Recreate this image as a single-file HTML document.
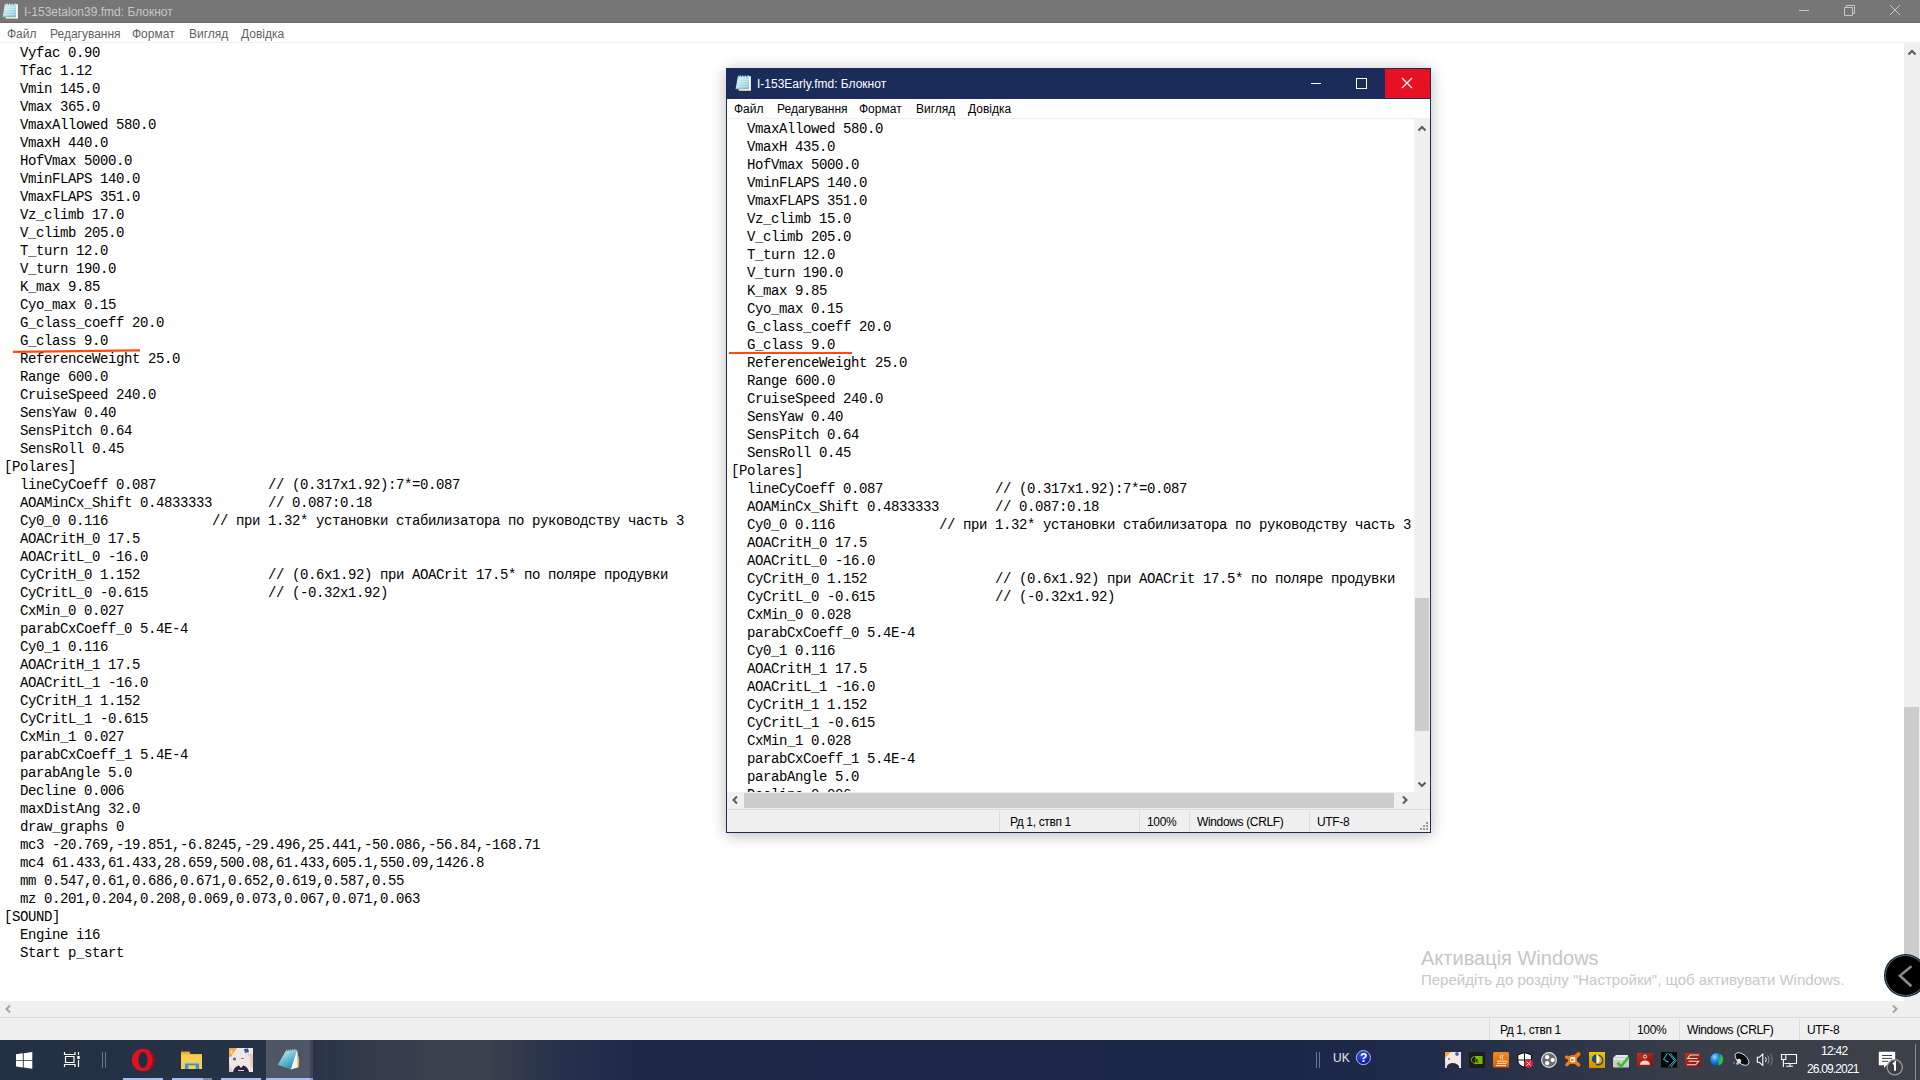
<!DOCTYPE html>
<html><head><meta charset="utf-8">
<style>
html,body{margin:0;padding:0;}
body{width:1920px;height:1080px;overflow:hidden;position:relative;background:#fff;font-family:"Liberation Sans",sans-serif;}
.a{position:absolute;}
.mono{font-family:"Liberation Mono",monospace;font-size:14px;letter-spacing:-0.4px;line-height:18px;white-space:pre;color:#000;}
.ui{font-family:"Liberation Sans",sans-serif;font-size:12px;white-space:pre;line-height:14px;}
</style></head><body>

<!-- ============ BIG WINDOW ============ -->
<div class="a" style="left:0;top:0;width:1920px;height:22px;background:#767676;"></div><div class="a" style="left:0;top:22px;width:1920px;height:1px;background:#6a6a6a;"></div>
<!-- notepad icon (big) -->
<svg class="a" style="left:-1px;top:0px" width="24" height="22" viewBox="0 0 24 22">
  <defs><linearGradient id="npbb" x1="0" y1="0" x2="1" y2="1"><stop offset="0" stop-color="#e2f6fa"/><stop offset="0.6" stop-color="#a9d8e4"/><stop offset="1" stop-color="#7fbfd0"/></linearGradient></defs>
  <path d="M6.8 4.2H18.9V18.9H6.8Z" fill="#f7fbfb"/>
  <path d="M6.8 18.2H18.9V19H6.8Z" fill="#d9b66a"/>
  <path d="M6 3.6H17V17H3.6Z" fill="url(#npbb)"/>
  <path d="M5.5 7.2H16.6M5.3 9.6H16.6M5 12H16.6M4.6 14.4H16.6" stroke="#e6f7fa" stroke-width="0.7" opacity="0.8"/>
  <path d="M3.8 16.4H16.8V17.2H3.6Z" fill="#6fb5c8"/>
  <path d="M6.4 3H7.6V4.4H6.4Z M8.9 3H10.1V4.4H8.9Z M11.4 3H12.6V4.4H11.4Z M13.9 3H15.1V4.4H13.9Z" fill="#5e5e5e"/>
</svg>
<div class="a ui" style="left:24px;top:5px;color:#c6c6c6;">I-153etalon39.fmd: Блокнот</div>
<!-- controls -->
<div class="a" style="left:1799px;top:10px;width:10px;height:1px;background:#c6c6c6;"></div>
<svg class="a" style="left:1843px;top:4px" width="13" height="13" viewBox="0 0 13 13"><path d="M1.5 3.5H9.5V11.5H1.5Z M3.5 3.5V1.5H11.5V9.5H9.5" stroke="#c6c6c6" stroke-width="1" fill="none"/></svg>
<svg class="a" style="left:1889px;top:4px" width="12" height="12" viewBox="0 0 12 12"><path d="M1 1L11 11M11 1L1 11" stroke="#c6c6c6" stroke-width="1"/></svg>

<!-- menu -->
<div class="a ui" style="left:7px;top:27px;color:#5f5f5f;">Файл</div>
<div class="a ui" style="left:50px;top:27px;color:#5f5f5f;">Редагування</div>
<div class="a ui" style="left:132px;top:27px;color:#5f5f5f;">Формат</div>
<div class="a ui" style="left:189px;top:27px;color:#5f5f5f;">Вигляд</div>
<div class="a ui" style="left:241px;top:27px;color:#5f5f5f;">Довідка</div>
<div class="a" style="left:0;top:42px;width:1920px;height:1px;background:#f0f0f0;"></div>

<!-- text -->
<div class="a mono" id="bigtext" style="left:4px;top:44px;">  Vyfac 0.90
  Tfac 1.12
  Vmin 145.0
  Vmax 365.0
  VmaxAllowed 580.0
  VmaxH 440.0
  HofVmax 5000.0
  VminFLAPS 140.0
  VmaxFLAPS 351.0
  Vz_climb 17.0
  V_climb 205.0
  T_turn 12.0
  V_turn 190.0
  K_max 9.85
  Cyo_max 0.15
  G_class_coeff 20.0
  G_class 9.0
  ReferenceWeight 25.0
  Range 600.0
  CruiseSpeed 240.0
  SensYaw 0.40
  SensPitch 0.64
  SensRoll 0.45
[Polares]
  lineCyCoeff 0.087              // (0.317x1.92):7*=0.087
  AOAMinCx_Shift 0.4833333       // 0.087:0.18
  Cy0_0 0.116             // при 1.32* установки стабилизатора по руководству часть 3
  AOACritH_0 17.5
  AOACritL_0 -16.0
  CyCritH_0 1.152                // (0.6x1.92) при AOACrit 17.5* по поляре продувки
  CyCritL_0 -0.615               // (-0.32x1.92)
  CxMin_0 0.027
  parabCxCoeff_0 5.4E-4
  Cy0_1 0.116
  AOACritH_1 17.5
  AOACritL_1 -16.0
  CyCritH_1 1.152
  CyCritL_1 -0.615
  CxMin_1 0.027
  parabCxCoeff_1 5.4E-4
  parabAngle 5.0
  Decline 0.006
  maxDistAng 32.0
  draw_graphs 0
  mc3 -20.769,-19.851,-6.8245,-29.496,25.441,-50.086,-56.84,-168.71
  mc4 61.433,61.433,28.659,500.08,61.433,605.1,550.09,1426.8
  mm 0.547,0.61,0.686,0.671,0.652,0.619,0.587,0.55
  mz 0.201,0.204,0.208,0.069,0.073,0.067,0.071,0.063
[SOUND]
  Engine i16
  Start p_start</div>
<svg class="a" style="left:0;top:340px" width="160" height="20" viewBox="0 340 160 20"><path d="M13 351.9L140 350.4" stroke="#ff4a14" stroke-width="2.2"/></svg>

<!-- vertical scrollbar -->
<div class="a" style="left:1904px;top:43px;width:16px;height:958px;background:#f0f0f0;"></div>
<svg class="a" style="left:1907px;top:48px" width="10" height="8" viewBox="0 0 10 8"><path d="M1.5 6.5 L5 3 L8.5 6.5" stroke="#5a5a5a" stroke-width="2" fill="none"/></svg>
<div class="a" style="left:1904px;top:707px;width:15px;height:278px;background:#cdcdcd;"></div>

<!-- horizontal scrollbar -->
<div class="a" style="left:0;top:1001px;width:1920px;height:16px;background:#f0f0f0;"></div>
<svg class="a" style="left:4px;top:1004px" width="8" height="10" viewBox="0 0 8 10"><path d="M6 1.5 L2.5 5 L6 8.5" stroke="#a3a3a3" stroke-width="2" fill="none"/></svg>
<svg class="a" style="left:1891px;top:1004px" width="8" height="10" viewBox="0 0 8 10"><path d="M2 1.5 L5.5 5 L2 8.5" stroke="#a3a3a3" stroke-width="2" fill="none"/></svg>
<div class="a" style="left:0;top:1017px;width:1920px;height:1px;background:#dadada;"></div>
<!-- status bar -->
<div class="a" style="left:0;top:1018px;width:1920px;height:22px;background:#f0f0f0;"></div>
<div class="a" style="left:1489px;top:1019px;width:1px;height:21px;background:#dcdcdc;"></div>
<div class="a" style="left:1629px;top:1019px;width:1px;height:21px;background:#dcdcdc;"></div>
<div class="a" style="left:1679px;top:1019px;width:1px;height:21px;background:#dcdcdc;"></div>
<div class="a" style="left:1799px;top:1019px;width:1px;height:21px;background:#dcdcdc;"></div>
<div class="a ui" style="left:1500px;top:1023px;color:#000;letter-spacing:-0.35px;">Рд 1, ствп 1</div>
<div class="a ui" style="left:1637px;top:1023px;color:#000;letter-spacing:-0.35px;">100%</div>
<div class="a ui" style="left:1687px;top:1023px;color:#000;letter-spacing:-0.35px;">Windows (CRLF)</div>
<div class="a ui" style="left:1807px;top:1023px;color:#000;letter-spacing:-0.35px;">UTF-8</div>

<!-- watermark -->
<div class="a" style="left:1421px;top:947px;font-size:20px;line-height:22px;color:#c6c6c6;white-space:pre;">Активація Windows</div>
<div class="a" style="left:1421px;top:972px;font-size:15px;line-height:16px;color:#c8c8c8;white-space:pre;">Перейдіть до розділу "Настройки", щоб активувати Windows.</div>

<!-- circle button -->
<div class="a" style="left:1885px;top:955px;width:41px;height:41px;border-radius:50%;background:#000;box-sizing:border-box;border:1px solid #3f7a92;box-shadow:0 0 0 1px #1a1a1a;"></div>
<svg class="a" style="left:1898px;top:964px" width="16" height="25" viewBox="0 0 16 25"><path d="M13.4 2.2 L2 11.8 L13.4 22.2" stroke="#8a8a8a" stroke-width="2.6" fill="none"/></svg>

<!-- ============ SMALL WINDOW ============ -->
<div class="a" style="left:726px;top:68px;width:705px;height:765px;box-shadow:0 2px 14px rgba(0,0,0,0.28);background:#1b2c5b;"></div>
<div class="a" style="left:727px;top:69px;width:703px;height:30px;background:#1b2c5b;"></div>
<div class="a" style="left:1385px;top:69px;width:45px;height:29px;background:#e81123;"></div>
<svg class="a" style="left:732px;top:72px" width="24" height="22" viewBox="0 0 24 22">
  <defs><linearGradient id="npbs" x1="0" y1="0" x2="1" y2="1"><stop offset="0" stop-color="#e2f6fa"/><stop offset="0.6" stop-color="#a9d8e4"/><stop offset="1" stop-color="#7fbfd0"/></linearGradient></defs>
  <path d="M6.8 4.2H18.9V18.9H6.8Z" fill="#f7fbfb"/>
  <path d="M6.8 18.2H18.9V19H6.8Z" fill="#d9b66a"/>
  <path d="M6 3.6H17V17H3.6Z" fill="url(#npbs)"/>
  <path d="M5.5 7.2H16.6M5.3 9.6H16.6M5 12H16.6M4.6 14.4H16.6" stroke="#e6f7fa" stroke-width="0.7" opacity="0.8"/>
  <path d="M3.8 16.4H16.8V17.2H3.6Z" fill="#6fb5c8"/>
  <path d="M6.4 3H7.6V4.4H6.4Z M8.9 3H10.1V4.4H8.9Z M11.4 3H12.6V4.4H11.4Z M13.9 3H15.1V4.4H13.9Z" fill="#1b2850"/>
</svg>
<div class="a ui" style="left:757px;top:77px;color:#fff;">I-153Early.fmd: Блокнот</div>
<div class="a" style="left:1311px;top:83px;width:10px;height:1px;background:#fff;"></div>
<div class="a" style="left:1356px;top:78px;width:11px;height:11px;border:1px solid #fff;box-sizing:border-box;"></div>
<svg class="a" style="left:1401px;top:77px" width="12" height="12" viewBox="0 0 12 12"><path d="M1 1L11 11M11 1L1 11" stroke="#fff" stroke-width="1.15"/></svg>

<div class="a" style="left:727px;top:99px;width:703px;height:19px;background:#fff;"></div>
<div class="a ui" style="left:734px;top:102px;color:#000;">Файл</div>
<div class="a ui" style="left:777px;top:102px;color:#000;">Редагування</div>
<div class="a ui" style="left:859px;top:102px;color:#000;">Формат</div>
<div class="a ui" style="left:916px;top:102px;color:#000;">Вигляд</div>
<div class="a ui" style="left:968px;top:102px;color:#000;">Довідка</div>
<div class="a" style="left:727px;top:118px;width:703px;height:1px;background:#f0f0f0;"></div>

<div class="a" style="left:727px;top:119px;width:687px;height:673px;background:#fff;overflow:hidden;">
  <div class="a mono" id="smalltext" style="left:4px;top:1px;">  VmaxAllowed 580.0
  VmaxH 435.0
  HofVmax 5000.0
  VminFLAPS 140.0
  VmaxFLAPS 351.0
  Vz_climb 15.0
  V_climb 205.0
  T_turn 12.0
  V_turn 190.0
  K_max 9.85
  Cyo_max 0.15
  G_class_coeff 20.0
  G_class 9.0
  ReferenceWeight 25.0
  Range 600.0
  CruiseSpeed 240.0
  SensYaw 0.40
  SensPitch 0.64
  SensRoll 0.45
[Polares]
  lineCyCoeff 0.087              // (0.317x1.92):7*=0.087
  AOAMinCx_Shift 0.4833333       // 0.087:0.18
  Cy0_0 0.116             // при 1.32* установки стабилизатора по руководству часть 3
  AOACritH_0 17.5
  AOACritL_0 -16.0
  CyCritH_0 1.152                // (0.6x1.92) при AOACrit 17.5* по поляре продувки
  CyCritL_0 -0.615               // (-0.32x1.92)
  CxMin_0 0.028
  parabCxCoeff_0 5.4E-4
  Cy0_1 0.116
  AOACritH_1 17.5
  AOACritL_1 -16.0
  CyCritH_1 1.152
  CyCritL_1 -0.615
  CxMin_1 0.028
  parabCxCoeff_1 5.4E-4
  parabAngle 5.0
  Decline 0.006</div>
  <div class="a" style="left:2px;top:233px;width:123px;height:2px;background:#ff4a14;"></div>
</div>
<!-- v scroll -->
<div class="a" style="left:1414px;top:119px;width:16px;height:673px;background:#f0f0f0;"></div>
<svg class="a" style="left:1417px;top:124px" width="10" height="8" viewBox="0 0 10 8"><path d="M1.5 6.5 L5 3 L8.5 6.5" stroke="#5a5a5a" stroke-width="2" fill="none"/></svg>
<svg class="a" style="left:1417px;top:781px" width="10" height="8" viewBox="0 0 10 8"><path d="M1.5 1.5 L5 5 L8.5 1.5" stroke="#5a5a5a" stroke-width="2" fill="none"/></svg>
<div class="a" style="left:1415px;top:598px;width:14px;height:133px;background:#cdcdcd;"></div>
<!-- h scroll -->
<div class="a" style="left:727px;top:792px;width:703px;height:17px;background:#f0f0f0;"></div>
<div class="a" style="left:744px;top:793px;width:650px;height:15px;background:#cdcdcd;"></div>
<svg class="a" style="left:731px;top:795px" width="8" height="10" viewBox="0 0 8 10"><path d="M6 1.5 L2.5 5 L6 8.5" stroke="#5a5a5a" stroke-width="2" fill="none"/></svg>
<svg class="a" style="left:1401px;top:795px" width="8" height="10" viewBox="0 0 8 10"><path d="M2 1.5 L5.5 5 L2 8.5" stroke="#5a5a5a" stroke-width="2" fill="none"/></svg>
<div class="a" style="left:727px;top:809px;width:703px;height:1px;background:#dadada;"></div>
<div class="a" style="left:727px;top:810px;width:703px;height:22px;background:#f0f0f0;"></div>
<div class="a" style="left:999px;top:811px;width:1px;height:21px;background:#dcdcdc;"></div>
<div class="a" style="left:1139px;top:811px;width:1px;height:21px;background:#dcdcdc;"></div>
<div class="a" style="left:1189px;top:811px;width:1px;height:21px;background:#dcdcdc;"></div>
<div class="a" style="left:1309px;top:811px;width:1px;height:21px;background:#dcdcdc;"></div>
<div class="a ui" style="left:1010px;top:815px;color:#000;letter-spacing:-0.35px;">Рд 1, ствп 1</div>
<div class="a ui" style="left:1147px;top:815px;color:#000;letter-spacing:-0.35px;">100%</div>
<div class="a ui" style="left:1197px;top:815px;color:#000;letter-spacing:-0.35px;">Windows (CRLF)</div>
<div class="a ui" style="left:1317px;top:815px;color:#000;letter-spacing:-0.35px;">UTF-8</div>
<!-- grip -->
<div class="a" style="left:1426px;top:822px;width:2px;height:2px;background:#999;box-shadow:-3px 3px 0 #999,0 3px 0 #999,-6px 6px 0 #999,-3px 6px 0 #999,0 6px 0 #999;"></div>

<!-- ============ TASKBAR ============ -->
<div class="a" style="left:0;top:1040px;width:1920px;height:40px;background:linear-gradient(90deg,#243044 0px,#263245 300px,#2c3748 330px,#343e4b 390px,#39424c 440px,#3a434d 480px,#313b4c 520px,#262f4b 570px,#1e2748 640px,#1c2649 1300px,#202b4a 1420px,#2c3549 1560px,#393f48 1700px,#3b4049 1920px);"></div>
<!-- start -->
<svg class="a" style="left:16px;top:1052px" width="17" height="17" viewBox="0 0 17 17"><path d="M0 2.3L6.8 1.3V7.9H0Z M7.7 1.2L16.3 0V7.9H7.7Z M0 8.8H6.8V15.4L0 14.4Z M7.7 8.8H16.3V16.7L7.7 15.5Z" fill="#fff"/></svg>
<!-- task view -->
<svg class="a" style="left:63px;top:1051px" width="18" height="17" viewBox="0 0 18 17"><path d="M1.5 1V3.5H12V1 M1.5 16V13.5H12V16 M2.5 5.5H11V11.5H2.5Z M15.5 1V4 M15.5 9V16" stroke="#fff" stroke-width="1.2" fill="none"/><rect x="14.3" y="5" width="2.4" height="3" fill="#fff"/></svg>
<div class="a" style="left:102px;top:1052px;width:1px;height:16px;background:#6c7686;"></div>
<div class="a" style="left:105px;top:1052px;width:1px;height:16px;background:#6c7686;"></div>
<!-- opera -->
<svg class="a" style="left:130px;top:1047px" width="26" height="26" viewBox="0 0 26 26"><ellipse cx="13" cy="13" rx="11.2" ry="11.3" fill="#e0101e"/><ellipse cx="13" cy="13" rx="4.6" ry="8" fill="#232e40"/><path d="M20 5 A11 11 0 0 1 20 21" stroke="#b0091a" stroke-width="2" fill="none"/></svg>
<!-- explorer -->
<svg class="a" style="left:180px;top:1050px" width="24" height="21" viewBox="0 0 24 21"><path d="M1 2.5H9L10.5 4H22V19H1Z" fill="#f5cd57"/><path d="M1 1.5H9.5L10.5 3.5H1Z" fill="#e3a51e"/><path d="M1 4.2H22V5H1Z" fill="#e9b83a"/><path d="M5 19V13.5H19V19H15.5V15.5H8.5V19Z" fill="#2f97dc"/><rect x="8.5" y="15.5" width="7" height="3.5" fill="#f5cd57"/></svg>
<!-- anime -->
<svg class="a" style="left:229px;top:1048px" width="24" height="24" viewBox="0 0 24 24">
 <rect x="0" y="0" width="24" height="24" fill="#efe7e4"/>
 <path d="M0 0H8L5 4L2 9H0Z" fill="#f3a23c"/>
 <path d="M1.5 2H3.5V6H1.5Z" fill="#f8d8a8"/>
 <path d="M15 1L19 0.5L20 4L16 5Z" fill="#3d4aa6"/>
 <path d="M18 6C21 8 22 13 21 18L24 20V6Z" fill="#e8c8c0"/>
 <circle cx="5.5" cy="11" r="1.6" fill="#5560b8"/>
 <path d="M12 10.5H15" stroke="#806060" stroke-width="0.8"/>
 <path d="M4 24C5 19 9 17 12 17C15 17 19 19 20 24Z" fill="#2a2342"/>
 <path d="M9.5 17L12 20L14.5 17Z" fill="#efe7e4"/>
 <path d="M9 22.5H15" stroke="#d8d8e8" stroke-width="1"/>
 <path d="M0 14C1 18 2 21 4 24H0Z" fill="#d4ccd8"/>
</svg>
<!-- notepad active -->
<div class="a" style="left:266px;top:1040px;width:44px;height:40px;background:#4f5767;"></div>
<div class="a" style="left:310px;top:1040px;width:3px;height:40px;background:#3e4656;"></div>
<svg class="a" style="left:276px;top:1048px" width="25" height="25" viewBox="0 0 25 25">
 <defs><linearGradient id="npg" x1="0" y1="0" x2="0.6" y2="1"><stop offset="0" stop-color="#d6f0f6"/><stop offset="0.45" stop-color="#7cc8dc"/><stop offset="1" stop-color="#2a8fb0"/></linearGradient></defs>
 <path d="M9.6 3.3L21 2.3L23 12.5L22.3 19.2L14.8 21.6Z" fill="#f4f4f2"/>
 <path d="M21.2 4L23.2 12.5L22.5 19L21.5 19.3Z" fill="#d9b35a"/>
 <path d="M1.8 16.8L9.6 3.3L21 2.3L14.8 21.6Z" fill="url(#npg)"/>
 <path d="M10.5 3.1l0.4 -1.6M12.5 2.9l0.4 -1.6M14.5 2.8l0.4 -1.6M16.5 2.6l0.4 -1.6M18.5 2.5l0.4 -1.6" stroke="#b8c0c4" stroke-width="0.9"/>
</svg>
<!-- underlines -->
<div class="a" style="left:123px;top:1078px;width:40px;height:2px;background:#a9bdf2;"></div>
<div class="a" style="left:172px;top:1078px;width:31px;height:2px;background:#a9bdf2;"></div>
<div class="a" style="left:203px;top:1078px;width:9px;height:2px;background:#7886ad;"></div>
<div class="a" style="left:221px;top:1078px;width:40px;height:2px;background:#a9bdf2;"></div>
<div class="a" style="left:266px;top:1078px;width:44px;height:2px;background:#a9bdf2;"></div>
<div class="a" style="left:310px;top:1078px;width:3px;height:2px;background:#8a9ac8;"></div>

<!-- tray -->
<div class="a" style="left:1316px;top:1052px;width:1px;height:16px;background:#6c7686;"></div>
<div class="a" style="left:1319px;top:1052px;width:1px;height:16px;background:#6c7686;"></div>
<div class="a" style="left:1333px;top:1051px;font-size:12px;line-height:14px;color:#e8e8e8;white-space:pre;">UK</div>
<svg class="a" style="left:1440px;top:1044px" width="480" height="36" viewBox="1440 1044 480 36">
 <defs>
  <radialGradient id="helpg" cx="0.4" cy="0.35" r="0.7"><stop offset="0" stop-color="#3a5af0"/><stop offset="1" stop-color="#000c90"/></radialGradient>
  <linearGradient id="javag" x1="0" y1="0" x2="0" y2="1"><stop offset="0" stop-color="#f08a20"/><stop offset="1" stop-color="#d86008"/></linearGradient>
  <linearGradient id="goldg" x1="0" y1="0" x2="0" y2="1"><stop offset="0" stop-color="#f2c400"/><stop offset="1" stop-color="#d88a00"/></linearGradient>
  <linearGradient id="redg" x1="0" y1="0" x2="1" y2="1"><stop offset="0" stop-color="#c03018"/><stop offset="1" stop-color="#7a1410"/></linearGradient>
  <radialGradient id="globeg" cx="0.35" cy="0.3" r="0.75"><stop offset="0" stop-color="#8fd8ff"/><stop offset="0.45" stop-color="#1a88e8"/><stop offset="1" stop-color="#0a40b0"/></radialGradient>
 </defs>
 <!-- anime -->
 <rect x="1445" y="1052" width="16" height="16" fill="#f2e8e4"/>
 <path d="M1445 1052H1451L1445 1058Z" fill="#f5a43c"/>
 <path d="M1455 1053L1458 1052L1459 1055L1456 1056Z" fill="#4e50b0"/>
 <path d="M1447 1066C1449 1062 1456 1062 1459 1066V1068H1447Z" fill="#2c2540"/>
 <circle cx="1449" cy="1059" r="1" fill="#5a68c0"/>
 <path d="M1445 1060C1446 1064 1447 1066 1447 1068H1445Z" fill="#d8d0e0"/>
 <!-- nvidia -->
 <rect x="1469" y="1052" width="16" height="16" fill="#1c1c1c"/>
 <rect x="1475" y="1056" width="7.5" height="8" fill="#76b900"/>
 <path d="M1474.5 1056.2C1472 1057 1471 1059 1471.5 1060.5C1472 1062 1473.5 1063.3 1476 1064" stroke="#76b900" stroke-width="1" fill="none"/>
 <path d="M1476 1057.8C1474.8 1058.3 1474.3 1059.6 1474.8 1060.6C1475.3 1061.5 1476.8 1062 1478.5 1062.2" stroke="#1c1c1c" stroke-width="1" fill="none"/>
 <circle cx="1476.8" cy="1060" r="1" fill="#1c1c1c"/>
 <!-- java -->
 <rect x="1493" y="1052" width="16" height="15.5" rx="1.5" fill="url(#javag)"/>
 <path d="M1502 1054.5C1500 1056 1499.5 1057.5 1501 1059.5M1503.5 1055.2C1502 1056.5 1502 1058 1503 1059.5" stroke="#fff6e0" stroke-width="0.9" fill="none"/>
 <path d="M1497 1061.2H1505.5M1497 1063.4H1505.5M1496 1065.6H1506" stroke="#fff6e0" stroke-width="0.9"/>
 <path d="M1505.5 1060.8C1507.5 1060.8 1507.5 1063.2 1505.5 1063.6" stroke="#fff0c0" stroke-width="0.9" fill="none"/>
 <!-- shield -->
 <path d="M1524.5 1052.6L1531.4 1054.8V1060C1531.4 1063.6 1528.5 1066 1524.5 1067.4C1520.5 1066 1517.8 1063.6 1517.8 1060V1054.8Z" fill="#fff" stroke="#000" stroke-width="1"/>
 <path d="M1524.5 1052.6V1067.4M1517.8 1060H1531.4" stroke="#000" stroke-width="0.9"/>
 <circle cx="1528.6" cy="1063.6" r="4.5" fill="#dc2030"/>
 <path d="M1526.6 1061.6L1530.6 1065.6M1530.6 1061.6L1526.6 1065.6" stroke="#fff" stroke-width="1"/>
 <!-- grey circle -->
 <circle cx="1549" cy="1060" r="7.4" fill="#6c6e72" stroke="#e6e6e6" stroke-width="1.1"/>
 <circle cx="1547.2" cy="1057.2" r="2.1" fill="#fff"/>
 <circle cx="1552.7" cy="1060.1" r="2.1" fill="#fff"/>
 <circle cx="1547.2" cy="1063.2" r="2.1" fill="#fff"/>
 <!-- avast -->
 <g stroke="#f57a10" stroke-linecap="round" fill="none">
  <path d="M1572.5 1059.5L1578.6 1054" stroke-width="4"/>
  <path d="M1572.5 1059.5L1566.5 1057.2" stroke-width="3.4"/>
  <path d="M1572.5 1059.5L1567 1064.6" stroke-width="3.4"/>
  <path d="M1572.5 1059.5L1578.6 1064.8" stroke-width="3.6"/>
 </g>
 <circle cx="1572.5" cy="1059.5" r="4.6" fill="#f57a10"/>
 <circle cx="1572.3" cy="1060" r="1.9" stroke="#fff" stroke-width="1.1" fill="none"/>
 <path d="M1574.6 1057.4V1062.2M1570.6 1057.6H1574.6" stroke="#fff" stroke-width="1.1"/>
 <!-- gold -->
 <rect x="1589" y="1052" width="16" height="16" fill="url(#goldg)"/>
 <path d="M1596.5 1054.2C1593 1054.6 1591.3 1057.5 1592 1060.2C1592.6 1062.3 1594.5 1063.3 1596.5 1063.5Z" fill="#0d4f8a"/>
 <path d="M1596.5 1054.2C1599 1055 1600 1058 1599.5 1061C1599.2 1062.5 1598 1063.3 1596.5 1063.5Z" fill="#fff3c0"/>
 <path d="M1598.5 1055C1602 1056 1603.5 1059.5 1602.5 1062.3C1601.5 1064.5 1598.5 1065 1596 1064.5" stroke="#0d4f8a" stroke-width="1.3" fill="none"/>
 <!-- printer check -->
 <path d="M1614 1057L1616 1055H1628V1057Z" fill="#e8e8e8"/>
 <rect x="1613" y="1057" width="16" height="10.5" rx="1" fill="#c9c9cb"/>
 <rect x="1614" y="1058" width="14" height="2" fill="#e2e2e2"/>
 <path d="M1617.6 1062.8L1621 1066.5L1628.6 1057" stroke="#2ec42e" stroke-width="2.6" fill="none"/>
 <!-- red person -->
 <rect x="1637" y="1053" width="16.5" height="13.5" fill="url(#redg)"/>
 <circle cx="1645" cy="1056.6" r="1.6" stroke="#eadcd8" stroke-width="1" fill="none"/>
 <path d="M1639.8 1064.8C1640.3 1061.8 1642.5 1060.6 1645 1060.6C1647.5 1060.6 1649.7 1061.8 1650.2 1064.8Z" fill="#e6d8d4"/>
 <!-- black cyan -->
 <rect x="1661" y="1052" width="16" height="15.5" fill="#050505"/>
 <path d="M1667.5 1053L1663.5 1059.5L1666 1060.5M1668.5 1053.5L1674.5 1060.5L1669 1066.5M1670.5 1053.5L1676 1060.5L1671 1067" stroke="#38c0ea" stroke-width="1" fill="none"/>
 <path d="M1665.5 1061L1668.5 1062" stroke="#38c0ea" stroke-width="1.2"/>
 <!-- red S -->
 <rect x="1685" y="1053" width="16" height="14" fill="url(#redg)"/>
 <path d="M1699 1055H1690.2L1687.6 1058.5H1697.5M1687 1064.8H1695.8L1698.6 1061.3H1688.5" stroke="#f0e0dc" stroke-width="1.1" fill="none"/>
 <!-- globe -->
 <circle cx="1716.6" cy="1059.5" r="6.4" fill="url(#globeg)"/>
 <path d="M1720.5 1053.8C1723 1055.5 1723.6 1058.5 1723 1061C1722.4 1063.5 1720.5 1065 1718.5 1065.4C1719 1063 1718.2 1061.6 1718.8 1060C1719.5 1058.4 1721 1057.8 1720.5 1053.8Z" fill="#30c040"/>
 <!-- dish -->
 <ellipse cx="1742" cy="1059" rx="8.2" ry="4.6" transform="rotate(40 1742 1059)" fill="#0c0c0c" stroke="#e8e8e8" stroke-width="0.9"/>
 <circle cx="1739" cy="1061" r="2.2" fill="#e0e0e0"/>
 <circle cx="1737.5" cy="1063.5" r="1.3" fill="#c8c8c8"/>
 <circle cx="1734" cy="1063" r="0.8" fill="#aaa"/>
 <!-- volume -->
 <path d="M1757.3 1057.3H1759.3L1762.8 1054V1065.3L1759.3 1062.3H1757.3Z" stroke="#fff" stroke-width="1.1" fill="none"/>
 <path d="M1765.4 1057.2C1766.4 1058.4 1766.4 1060.8 1765.4 1062" stroke="#fff" stroke-width="1" fill="none"/>
 <path d="M1767.6 1055.5C1769.4 1057.5 1769.4 1061.7 1767.6 1063.7" stroke="#9aa0a8" stroke-width="1" fill="none"/>
 <path d="M1770 1053.5C1772.8 1056.5 1772.8 1062.7 1770 1065.7" stroke="#7c828a" stroke-width="1" fill="none"/>
 <!-- network -->
 <path d="M1784.5 1054.5H1796.5V1063.5H1784.5 M1790 1063.5V1066.3 M1786.2 1066.3H1793 M1781.5 1054.5H1785.8V1059.5H1781.5Z M1783.4 1059.5V1067" stroke="#fff" stroke-width="1.1" fill="none"/>
 <!-- notification -->
 <path d="M1878.8 1051.8H1895.2V1065.3H1886.5L1884 1068V1065.3H1878.8Z" fill="#fff"/>
 <path d="M1882 1055.5H1892M1882 1058.4H1892M1882 1061.3H1888" stroke="#3b4048" stroke-width="1"/>
 <circle cx="1894.8" cy="1067.3" r="7.6" fill="#3a3f47" stroke="#9a9c9e" stroke-width="1.3"/>
 <path d="M1893 1064.2L1895 1062.4V1070.8" stroke="#fff" stroke-width="2" fill="none"/>
 <rect x="1915" y="1044" width="1" height="36" fill="#878d95"/>
</svg>
<svg class="a" style="left:1355px;top:1049px" width="17" height="17" viewBox="0 0 17 17"><circle cx="8.4" cy="8.6" r="7" fill="url(#helpg)" stroke="#c0c4d8" stroke-width="1"/><text x="8.6" y="13" text-anchor="middle" font-family="Liberation Sans" font-weight="bold" font-size="12" fill="#fff">?</text></svg>
<div class="a" style="left:1821px;top:1044px;font-size:12px;line-height:14px;letter-spacing:-0.7px;color:#fff;white-space:pre;">12:42</div>
<div class="a" style="left:1807px;top:1062px;font-size:12px;line-height:14px;letter-spacing:-0.85px;color:#fff;white-space:pre;">26.09.2021</div>
</body></html>
